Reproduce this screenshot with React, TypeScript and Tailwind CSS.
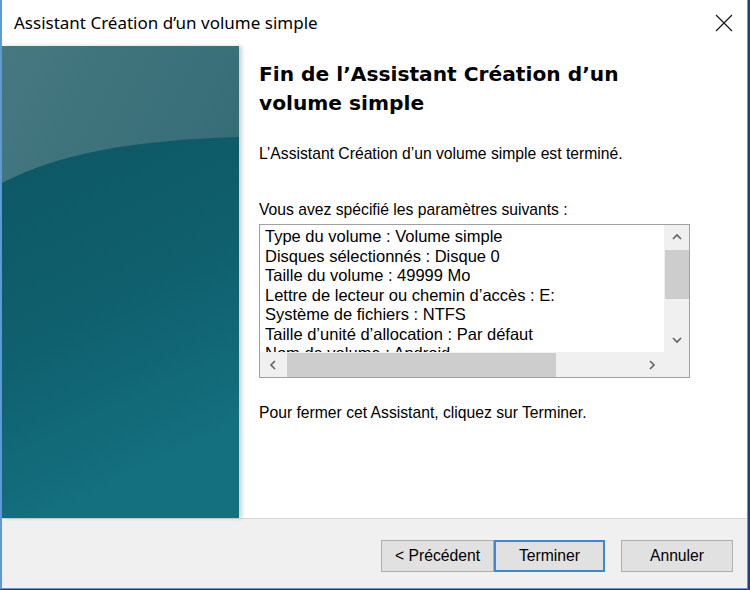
import React from "react";

const lines = [
  "Type du volume : Volume simple",
  "Disques sélectionnés : Disque 0",
  "Taille du volume : 49999 Mo",
  "Lettre de lecteur ou chemin d’accès : E:",
  "Système de fichiers : NTFS",
  "Taille d’unité d’allocation : Par défaut",
  "Nom de volume : Android",
];

function Chevron({ dir }: { dir: "up" | "down" | "left" | "right" }) {
  const d: Record<string, string> = {
    up: "M2 7 L6 3 L10 7",
    down: "M2 4 L6 8 L10 4",
    left: "M7 2 L3 6 L7 10",
    right: "M4 2 L8 6 L4 10",
  };
  return (
    <svg width="12" height="12" viewBox="0 0 12 12">
      <path d={d[dir]} fill="none" stroke="#606060" strokeWidth="1.6" />
    </svg>
  );
}

export default function App() {
  return (
    <div className="w-[750px] h-[590px] bg-[#1a3f8a] overflow-hidden">
      <div
        className="w-[748px] h-[589px] flex flex-col bg-white border-l-2 border-r border-b border-[#5d9ad6]"
        style={{ fontFamily: '"Liberation Sans", Arial, sans-serif' }}
      >
        {/* Title bar */}
        <div className="h-[46px] flex items-center justify-between pl-[12px] pr-[14px] shrink-0">
          <span
            className="text-[17px] text-black"
            style={{ fontFamily: '"Noto Sans", "Open Sans", sans-serif' }}
          >
            Assistant Création d’un volume simple
          </span>
          <svg width="18" height="18" viewBox="0 0 18 18">
            <path d="M1 1 L17 17 M17 1 L1 17" stroke="#111" strokeWidth="1.1" />
          </svg>
        </div>

        {/* Body */}
        <div className="flex flex-1 min-h-0">
          <div className="w-[237px] shrink-0 relative shadow-[3px_0_4px_rgba(0,0,0,0.18)]">
            <svg className="absolute inset-0" width="237" height="472" viewBox="0 0 237 472" preserveAspectRatio="none">
              <defs>
                <linearGradient id="top" x1="0" y1="0" x2="1" y2="1">
                  <stop offset="0" stopColor="#467880" />
                  <stop offset="1" stopColor="#2a6670" />
                </linearGradient>
                <linearGradient id="bot" x1="0" y1="0" x2="0.3" y2="1">
                  <stop offset="0" stopColor="#0d5764" />
                  <stop offset="0.5" stopColor="#0f5f6d" />
                  <stop offset="1" stopColor="#14707f" />
                </linearGradient>
              </defs>
              <rect width="237" height="472" fill="url(#top)" />
              <path d="M0 137 C 55 108, 130 94, 237 91 L237 472 L0 472 Z" fill="url(#bot)" />
            </svg>
          </div>
          <div className="flex-1 pl-[20px] pr-[56px] pt-[14px] text-[15.7px] text-black">
            <h1
              className="text-[20.2px] font-bold leading-[29px] text-black"
              style={{ fontFamily: '"DejaVu Sans", Verdana, sans-serif' }}
            >
              Fin de l’Assistant Création d’un
              <br />
              volume simple
            </h1>
            <p className="mt-[27px] leading-[18px]">L’Assistant Création d’un volume simple est terminé.</p>
            <p className="mt-[38px] leading-[18px]">Vous avez spécifié les paramètres suivants :</p>
            <div className="mt-[5px] w-[431px] h-[154px] border border-[#a0a0a0] flex flex-col bg-white">
              <div className="flex flex-1 min-h-0">
                <div className="flex-1 overflow-hidden pl-[5px] pt-[2px] text-[16.5px] leading-[19.5px] whitespace-nowrap">
                  {lines.map((l) => (
                    <div key={l}>{l}</div>
                  ))}
                </div>
                <div className="w-[25px] bg-[#f0f0f0] flex flex-col items-center">
                  <div className="h-[25px] flex items-center justify-center">
                    <Chevron dir="up" />
                  </div>
                  <div className="w-[24px] h-[49px] bg-[#cdcdcd]" />
                  <div className="flex-1" />
                  <div className="h-[25px] flex items-center justify-center">
                    <Chevron dir="down" />
                  </div>
                </div>
              </div>
              <div className="h-[25px] flex bg-[#f0f0f0]">
                <div className="w-[27px] flex items-center justify-center">
                  <Chevron dir="left" />
                </div>
                <div className="w-[269px] h-[24px] self-center bg-[#cdcdcd]" />
                <div className="flex-1" />
                <div className="w-[25px] flex items-center justify-center mr-[25px]">
                  <Chevron dir="right" />
                </div>
              </div>
            </div>
            <p className="mt-[26px] leading-[18px]">Pour fermer cet Assistant, cliquez sur Terminer.</p>
          </div>
        </div>

        {/* Footer */}
        <div className="h-[70px] shrink-0 bg-[#f0f0f0] border-t border-[#d8d8d8] flex items-start justify-end pt-[21px] pr-[14px] text-[15.7px]">
          <button className="w-[113px] h-[32px] bg-[#e1e1e1] border border-[#adadad] text-black">
            &lt; Précédent
          </button>
          <button className="w-[111px] h-[32px] bg-[#e1e1e1] border-2 border-[#3c88d4] text-black">
            Terminer
          </button>
          <button className="ml-[16px] w-[112px] h-[32px] bg-[#e1e1e1] border border-[#adadad] text-black">
            Annuler
          </button>
        </div>
      </div>
    </div>
  );
}
